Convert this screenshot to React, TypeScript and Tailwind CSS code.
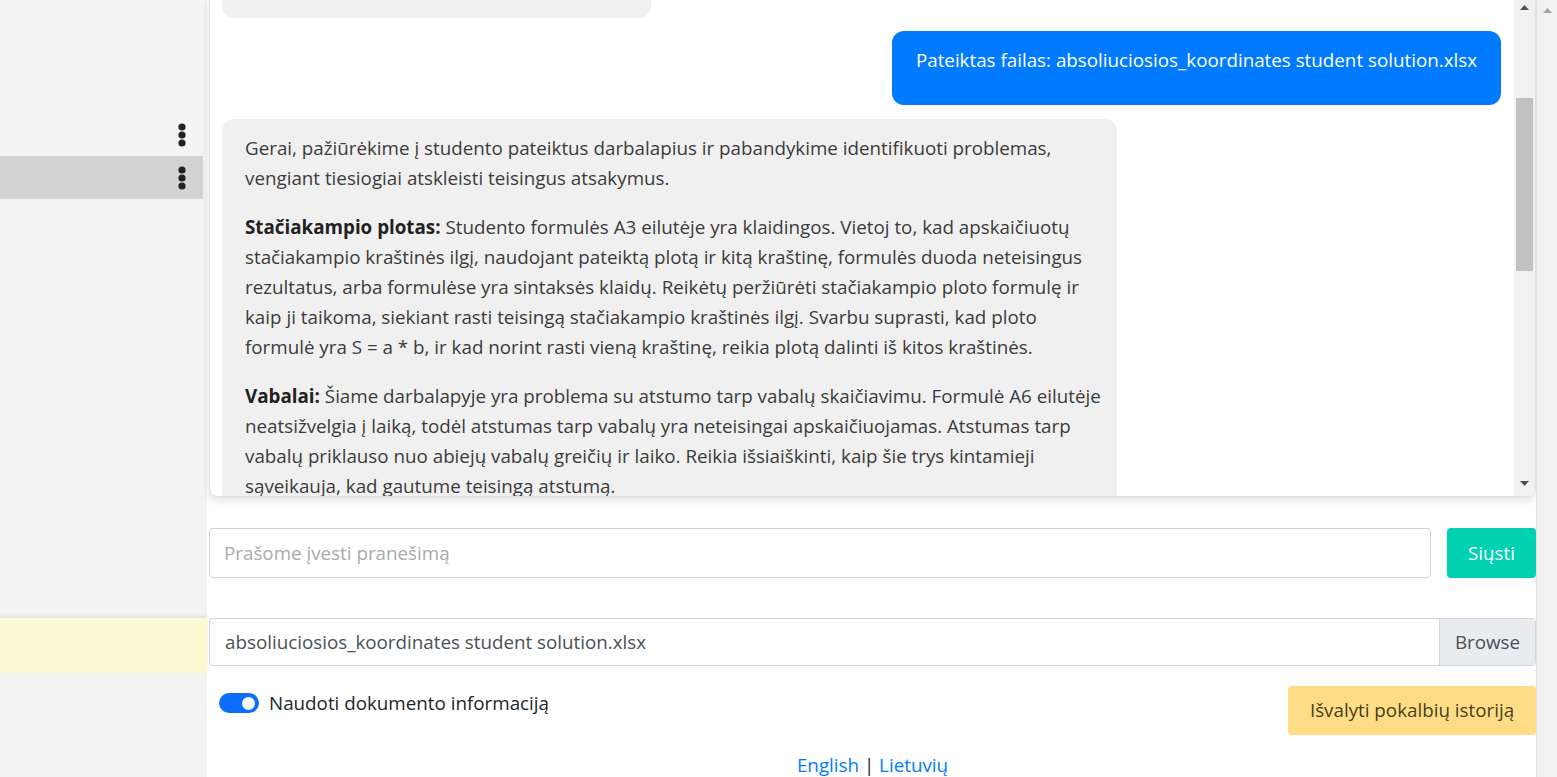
import { useState } from "react"

const FONT = "font-['Open_Sans','Noto_Sans',sans-serif]"

// three stacked dots, like the reference's kebab
const Kebab = () => (
  <svg width="8" height="24" viewBox="0 0 8 24" className="text-[#222]">
    <circle cx="4" cy="4" r="3.6" fill="currentColor" />
    <circle cx="4" cy="12" r="3.6" fill="currentColor" />
    <circle cx="4" cy="20" r="3.6" fill="currentColor" />
  </svg>
)

const Triangle = ({ down, color }: { down?: boolean; color: string }) => (
  <svg width="9" height="5" viewBox="0 0 9 5">
    <polygon points={down ? "0,0 9,0 4.5,5" : "0,5 9,5 4.5,0"} fill={color} />
  </svg>
)

const Sidebar = () => (
  <div className="w-[207px] shrink-0 bg-[#f4f4f4] flex flex-col pt-[113px]">
    <div className="h-[43px] w-[203px] flex items-center justify-end pr-[17px]">
      <Kebab />
    </div>
    <div className="h-[43px] w-[203px] bg-[#d3d3d3] flex items-center justify-end pr-[17px]">
      <Kebab />
    </div>
    <div className="mt-[419px] h-[55px] w-[207px] bg-[#fafad2] shadow-[0_-2px_4px_rgba(0,0,0,0.08)]" />
  </div>
)

const ChatScrollbar = () => (
  <div className="w-[21px] shrink-0 bg-[#f1f1f1] flex flex-col items-center pl-[2px] pr-[2px]">
    <div className="h-[20px] flex items-center pt-[4px]">
      <Triangle color="#505050" />
    </div>
    <div className="mt-[83px] h-[173px] w-[17px] bg-[#c1c1c1]" />
    <div className="flex-1" />
    <div className="h-[20px] flex items-center pb-[6px]">
      <Triangle down color="#505050" />
    </div>
  </div>
)

const App = () => {
  // whether the document info is used
  const [useDoc, setUseDoc] = useState(true)

  return (
    <div className={`${FONT} flex h-[777px] overflow-hidden bg-white text-[18.8px]`}>
      <Sidebar />

      <div className="flex-1 flex flex-col pl-[2px]">
        {/* CHAT WINDOW */}
        <div className="-mt-[6px] h-[503px] shrink-0 flex rounded-lg border border-[#dee2e6] bg-white shadow-[0_3px_10px_rgba(0,0,0,0.13)] overflow-hidden">
          <div className="flex-1 overflow-hidden pl-[12px] pr-[13px]">
            <div className="-mt-[37px] flex flex-col">
              <div className="h-[60px] w-[429px] rounded-[12px] bg-[#f0f0f0]" />
              <div className="mt-[13px] self-end rounded-[12px] bg-[#007bff] px-[24px] pt-[14px] pb-[14px] text-white">
                <p className="mb-[16px] leading-[30px]">Pateiktas failas: absoliuciosios_koordinates student solution.xlsx</p>
              </div>
              <div className="mt-[14px] w-[895px] rounded-[12px] bg-[#f0f0f0] px-[23px] pt-[14px] pb-[14px] text-[#3b3b3b] leading-[30px] whitespace-nowrap">
                <p className="mb-[19px]">
                  Gerai, pažiūrėkime į studento pateiktus darbalapius ir pabandykime identifikuoti problemas,<br />
                  vengiant tiesiogiai atskleisti teisingus atsakymus.
                </p>
                <p className="mb-[19px]">
                  <b className="text-[#222]">Stačiakampio plotas:</b> Studento formulės A3 eilutėje yra klaidingos. Vietoj to, kad apskaičiuotų<br />
                  stačiakampio kraštinės ilgį, naudojant pateiktą plotą ir kitą kraštinę, formulės duoda neteisingus<br />
                  rezultatus, arba formulėse yra sintaksės klaidų. Reikėtų peržiūrėti stačiakampio ploto formulę ir<br />
                  kaip ji taikoma, siekiant rasti teisingą stačiakampio kraštinės ilgį. Svarbu suprasti, kad ploto<br />
                  formulė yra S = a * b, ir kad norint rasti vieną kraštinę, reikia plotą dalinti iš kitos kraštinės.
                </p>
                <p className="mb-[19px]">
                  <b className="text-[#222]">Vabalai:</b> Šiame darbalapyje yra problema su atstumo tarp vabalų skaičiavimu. Formulė A6 eilutėje<br />
                  neatsižvelgia į laiką, todėl atstumas tarp vabalų yra neteisingai apskaičiuojamas. Atstumas tarp<br />
                  vabalų priklauso nuo abiejų vabalų greičių ir laiko. Reikia išsiaiškinti, kaip šie trys kintamieji<br />
                  sąveikauja, kad gautume teisingą atstumą.
                </p>
              </div>
            </div>
          </div>
          <ChatScrollbar />
        </div>

        {/* MESSAGE INPUT */}
        <div className="mt-[31px] flex gap-[16px] shrink-0">
          <input
            className="h-[50px] flex-1 rounded-[4px] border border-[#ced4da] px-[14px] text-[18.8px] text-[#495057] placeholder:text-[#aaaaaa] outline-none"
            placeholder="Prašome įvesti pranešimą"
          />
          <button className="h-[50px] w-[89px] rounded-[4px] bg-[#00d1b2] text-white">Siųsti</button>
        </div>

        {/* FILE INPUT */}
        <div className="mt-[40px] h-[48px] shrink-0 flex rounded-[4px] border border-[#ced4da] overflow-hidden">
          <div className="flex-1 flex items-center px-[15px] text-[#495057]">absoliuciosios_koordinates student solution.xlsx</div>
          <div className="w-[96px] flex items-center justify-center border-l border-[#ced4da] bg-[#e9ecef] text-[#495057]">Browse</div>
        </div>

        <div className="mt-[20px] flex items-start justify-between shrink-0">
          <label className="mt-[3px] ml-[10px] flex items-center gap-[10px] text-[#212529]">
            <button
              onClick={() => setUseDoc(!useDoc)}
              className={useDoc ? "h-[20px] w-[40px] rounded-full bg-[#0d6efd] flex items-center justify-end pr-[4px]" : "h-[20px] w-[40px] rounded-full border border-[#ced4da] bg-white flex items-center pl-[4px]"}
            >
              <span className={useDoc ? "h-[13px] w-[13px] rounded-full bg-white" : "h-[13px] w-[13px] rounded-full bg-[#ced4da]"} />
            </button>
            Naudoti dokumento informaciją
          </label>
          <button className="h-[49px] w-[248px] rounded-[4px] bg-[#ffdd87] text-[#4a3e1c]">Išvalyti pokalbių istoriją</button>
        </div>

        {/* LANGUAGE FOOTER */}
        <div className="mt-[16px] shrink-0 text-center text-[#212529] leading-[28px]">
          <a href="#" className="text-[#007bff]">English</a> | <a href="#" className="text-[#007bff]">Lietuvių</a>
        </div>
      </div>

      {/* page scrollbar */}
      <div className="w-[21px] shrink-0 border-l border-[#dcdcdc] bg-[#f1f1f1] flex justify-center pt-[8px]">
        <Triangle color="#a3a3a3" />
      </div>
    </div>
  )
}

export default App
